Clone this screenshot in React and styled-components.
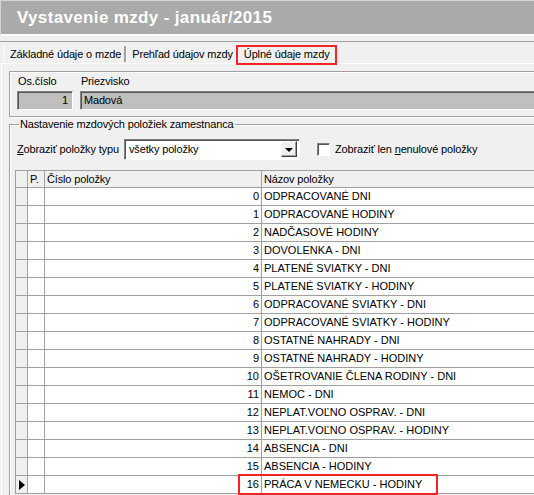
import React from 'react';
import styled, { createGlobalStyle } from 'styled-components';

const Global = createGlobalStyle`
  html, body { margin: 0; padding: 0; background: #f0f0f0; }
  body { font-family: "Liberation Sans", Arial, sans-serif; font-size: 11px; color: #000; letter-spacing: -0.15px; }
  * { box-sizing: border-box; }
`;

const Window = styled.div`
  width: 534px;
  height: 495px;
  overflow: hidden;
  background: #f0f0f0;
`;

const Inner = styled.div`
  width: 580px;
  display: flex;
  flex-direction: column;
`;

const TitleBar = styled.div`
  height: 36px;
  background: #aaaaaa;
  border-top: 1px solid #d4d4d4;
  border-left: 1px solid #d4d4d4;
  border-bottom: 2px solid #ffffff;
  display: flex;
  align-items: center;
  padding-left: 16px;
  color: #ffffff;
  font-family: "Liberation Sans", Arial, sans-serif;
  font-weight: bold;
  font-size: 17px;
  letter-spacing: 0.35px;
`;

const TabArea = styled.div`
  margin-top: 5px;
  border-top: 1px solid #a0a0a0;
  display: flex;
  flex-direction: column;
`;

const TabStrip = styled.div`
  display: flex;
  padding: 4px 0 0 4px;
  height: 21px;
`;

const Tab = styled.div`
  position: relative;
  height: 16px;
  padding: 1px 3px 0 5px;
  border-left: 1px solid #ffffff;
  border-right: 2px solid ${(p) => (p.$active ? '#f0f0f0' : '#a0a0a0')};
  line-height: 15px;
  white-space: nowrap;
  &::after {
    content: '';
    display: ${(p) => (p.$marked ? 'block' : 'none')};
    position: absolute;
    left: -3px;
    right: -4px;
    top: -1px;
    bottom: -3px;
    border: 2px solid #f42424;
  }
`;

const TabPage = styled.div`
  border-top: 1px solid #ffffff;
  border-left: 1px solid #ffffff;
  margin-left: 1px;
  padding: 7px 0 0 7px;
  display: flex;
  flex-direction: column;
`;

const GroupBox = styled.div`
  border: 1px solid #a0a0a0;
  box-shadow: inset 1px 1px 0 #ffffff, 1px 1px 0 #ffffff;
  height: 46px;
  padding: 3px 0 0 7px;
  display: flex;
  gap: 7px;
`;

const Field = styled.div`
  display: flex;
  flex-direction: column;
  width: ${(p) => p.$w};
`;

const FieldLabel = styled.div`
  height: 15px;
  line-height: 13px;
  padding-left: 1px;
`;

const ReadOnlyInput = styled.div`
  height: 19px;
  margin-top: 1px;
  background: #bfbfbf;
  border-top: 1px solid #808080;
  border-left: 1px solid #808080;
  border-bottom: 1px solid #ffffff;
  border-right: 1px solid #ffffff;
  box-shadow: inset 1px 1px 0 #555555;
  line-height: 16px;
  padding: 0 4px 0 3px;
  text-align: ${(p) => p.$align || 'left'};
`;

const FieldSet = styled.fieldset`
  margin: 1px 0 0 0;
  padding: 2px 0 0 4px;
  border: 1px solid #a0a0a0;
  box-shadow: inset 1px 1px 0 #ffffff;
  height: 400px;
`;

const Legend = styled.legend`
  padding: 0 1px 0 1px;
  margin-left: 5px;
  line-height: 13px;
  font-size: 11px;
`;

const FilterRow = styled.div`
  display: flex;
  align-items: center;
  height: 22px;
  margin-top: 5px;
  padding-left: 3px;
`;

const FilterLabel = styled.span`
  width: 107px;
  white-space: nowrap;
`;

const U = styled.span`
  text-decoration: underline;
`;

const Combo = styled.div`
  width: 176px;
  height: 21px;
  background: #ffffff;
  border-top: 1px solid #808080;
  border-left: 1px solid #808080;
  border-bottom: 1px solid #ffffff;
  border-right: 1px solid #ffffff;
  box-shadow: inset 1px 1px 0 #555555;
  display: flex;
  align-items: center;
  padding: 2px 2px 2px 4px;
`;

const ComboText = styled.span`
  flex: 1;
`;

const ComboButton = styled.div`
  width: 16px;
  height: 16px;
  background: #f0f0f0;
  border-top: 1px solid #ffffff;
  border-left: 1px solid #ffffff;
  border-right: 1px solid #404040;
  border-bottom: 1px solid #404040;
  box-shadow: inset -1px -1px 0 #a0a0a0;
  display: flex;
  align-items: center;
  justify-content: center;
`;

const Arrow = styled.span`
  width: 0;
  height: 0;
  border-left: 4px solid transparent;
  border-right: 4px solid transparent;
  border-top: 4px solid #000;
  margin-top: 1px;
`;

const CheckWrap = styled.label`
  display: flex;
  align-items: center;
  margin-left: 17px;
  gap: 5px;
`;

const CheckBox = styled.span`
  width: 13px;
  height: 13px;
  background: #ffffff;
  border-top: 1px solid #808080;
  border-left: 1px solid #808080;
  border-bottom: 1px solid #ffffff;
  border-right: 1px solid #ffffff;
  box-shadow: inset 1px 1px 0 #555555;
`;

const Grid = styled.div`
  position: relative;
  margin-top: 10px;
  margin-left: 1px;
  border-top: 1px solid #a0a0a0;
  border-left: 1px solid #a0a0a0;
  display: grid;
  grid-template-columns: 12px 17px 217px 320px;
  grid-auto-rows: 18px;
  grid-template-rows: 17px;
  letter-spacing: 0;
`;

const Cell = styled.div`
  border-right: 1px solid #a0a0a0;
  border-bottom: 1px solid #a0a0a0;
  background: ${(p) => (p.$gray ? '#f0f0f0' : '#ffffff')};
  line-height: 17px;
  padding: 0 2px;
  white-space: nowrap;
  overflow: hidden;
  display: flex;
  align-items: center;
  justify-content: ${(p) => (p.$align === 'right' ? 'flex-end' : 'flex-start')};
`;

const HeadCell = styled(Cell)`
  background: #f0f0f0;
  line-height: 16px;
  letter-spacing: -0.15px;
`;

const Pointer = styled.span`
  width: 0;
  height: 0;
  border-top: 5px solid transparent;
  border-bottom: 5px solid transparent;
  border-left: 6px solid #000;
  margin-left: 1px;
`;

const Highlight = styled.div`
  position: absolute;
  left: 222px;
  top: 303px;
  width: 200px;
  height: 21px;
  border: 2px solid #f42424;
  pointer-events: none;
`;

const items = [
  'ODPRACOVANÉ DNI',
  'ODPRACOVANÉ HODINY',
  'NADČASOVÉ HODINY',
  'DOVOLENKA - DNI',
  'PLATENÉ SVIATKY - DNI',
  'PLATENÉ SVIATKY - HODINY',
  'ODPRACOVANÉ SVIATKY - DNI',
  'ODPRACOVANÉ SVIATKY - HODINY',
  'OSTATNÉ NAHRADY - DNI',
  'OSTATNÉ NAHRADY - HODINY',
  'OŠETROVANIE ČLENA RODINY - DNI',
  'NEMOC - DNI',
  'NEPLAT.VOĽNO OSPRAV. - DNI',
  'NEPLAT.VOĽNO OSPRAV. - HODINY',
  'ABSENCIA - DNI',
  'ABSENCIA - HODINY',
  'PRÁCA V NEMECKU - HODINY',
];

export default function App() {
  return (
    <Window>
      <Global />
      <Inner>
        <TitleBar>Vystavenie mzdy - január/2015</TitleBar>
        <TabArea>
          <TabStrip>
            <Tab>Základné údaje o mzde</Tab>
            <Tab>Prehľad údajov mzdy</Tab>
            <Tab $active $marked>Úplné údaje mzdy</Tab>
          </TabStrip>
          <TabPage>
            <GroupBox>
              <Field $w="56px">
                <FieldLabel>Os.číslo</FieldLabel>
                <ReadOnlyInput $align="right">1</ReadOnlyInput>
              </Field>
              <Field $w="500px">
                <FieldLabel>Priezvisko</FieldLabel>
                <ReadOnlyInput>Madová</ReadOnlyInput>
              </Field>
            </GroupBox>
            <FieldSet>
              <Legend>Nastavenie mzdových položiek zamestnanca</Legend>
              <FilterRow>
                <FilterLabel>
                  <U>Z</U>obraziť položky typu
                </FilterLabel>
                <Combo>
                  <ComboText>všetky položky</ComboText>
                  <ComboButton>
                    <Arrow />
                  </ComboButton>
                </Combo>
                <CheckWrap>
                  <CheckBox />
                  <span>
                    Zobraziť len <U>n</U>enulové položky
                  </span>
                </CheckWrap>
              </FilterRow>
              <Grid>
                <HeadCell />
                <HeadCell>P.</HeadCell>
                <HeadCell>Číslo položky</HeadCell>
                <HeadCell>Názov položky</HeadCell>
                {items.map((name, i) => (
                  <React.Fragment key={i}>
                    <Cell $gray>{i === items.length - 1 ? <Pointer /> : null}</Cell>
                    <Cell />
                    <Cell $align="right">{i}</Cell>
                    <Cell>{name}</Cell>
                  </React.Fragment>
                ))}
                <Highlight />
              </Grid>
            </FieldSet>
          </TabPage>
        </TabArea>
      </Inner>
    </Window>
  );
}
